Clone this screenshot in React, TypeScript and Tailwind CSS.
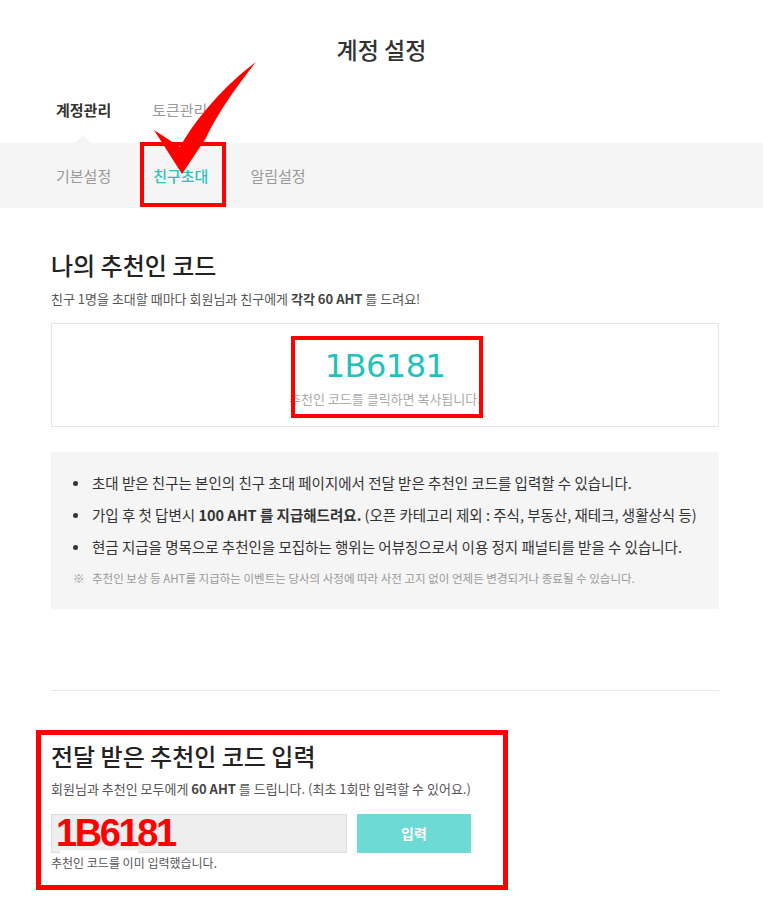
import React from "react";

export default function App() {
  return (
    <div className="relative w-[763px] h-[910px] bg-white font-['Noto_Sans_CJK_KR','Noto_Sans',sans-serif] text-[#333] overflow-hidden">
      {/* Title */}
      <div className="pt-[34px] h-[64px] text-center text-[23px] leading-[30px] font-medium text-[#333]">계정 설정</div>

      {/* Top tabs */}
      <div className="h-[79px] pt-[36px] pl-[56px] flex gap-[41px] text-[15px] leading-[20px]">
        <span className="font-bold text-[#333]">계정관리</span>
        <span className="text-[#999]">토큰관리</span>
      </div>

      {/* Sub tabs */}
      <div className="relative h-[65px] bg-[#f5f5f5] pl-[56px] flex items-center gap-[42px] text-[15px] leading-[20px]">
        <div className="absolute left-[75px] top-[-8px] w-0 h-0 border-l-[8px] border-r-[8px] border-b-[8px] border-l-transparent border-r-transparent border-b-[#f5f5f5]" />
        <span className="text-[#999]">기본설정</span>
        <span className="font-medium text-[#2bc3bb]">친구초대</span>
        <span className="text-[#999]">알림설정</span>
      </div>

      <div className="ml-[51px] w-[668px]">
        {/* Section 1 */}
        <h2 className="mt-[42px] text-[24px] leading-[30px] font-medium text-[#222]">나의 추천인 코드</h2>
        <p className="mt-[10px] text-[13px] leading-[18px] text-[#555]">
          친구 1명을 초대할 때마다 회원님과 친구에게 <b className="font-bold text-[#444]">각각 60 AHT</b> 를 드려요!
        </p>
        <div className="mt-[15px] h-[104px] border border-[#e5e5e5] flex flex-col items-center">
          <div className="mt-[22px] text-[32px] leading-[40px] font-['DejaVu_Sans',sans-serif] text-[#22c2ba] tracking-[-0.5px]">1B6181</div>
          <div className="mt-[4px] text-[13px] leading-[18px] text-[#aaa]">추천인 코드를 클릭하면 복사됩니다.</div>
        </div>

        {/* Info box */}
        <div className="mt-[25px] h-[157px] bg-[#f5f5f5] pl-[22px] pt-[15px] text-[14.5px] text-[#333]">
          <div className="h-[32px] flex items-center gap-[14px]">
            <span className="w-[5px] h-[5px] rounded-full bg-[#333] shrink-0" />
            <span>초대 받은 친구는 본인의 친구 초대 페이지에서 전달 받은 추천인 코드를 입력할 수 있습니다.</span>
          </div>
          <div className="h-[32px] flex items-center gap-[14px]">
            <span className="w-[5px] h-[5px] rounded-full bg-[#333] shrink-0" />
            <span>
              가입 후 첫 답변시 <b className="font-bold">100 AHT 를 지급해드려요.</b> (오픈 카테고리 제외 : 주식, 부동산, 재테크, 생활상식 등)
            </span>
          </div>
          <div className="h-[32px] flex items-center gap-[14px]">
            <span className="w-[5px] h-[5px] rounded-full bg-[#333] shrink-0" />
            <span>현금 지급을 명목으로 추천인을 모집하는 행위는 어뷰징으로서 이용 정지 패널티를 받을 수 있습니다.</span>
          </div>
          <div className="mt-[6px] h-[20px] flex items-center text-[11.5px] text-[#999]">
            <span className="w-[19px]">※</span>
            <span>추천인 보상 등 AHT를 지급하는 이벤트는 당사의 사정에 따라 사전 고지 없이 언제든 변경되거나 종료될 수 있습니다.</span>
          </div>
        </div>

        <div className="mt-[81px] h-px bg-[#e8e8e8]" />

        {/* Section 2 */}
        <h2 className="mt-[50px] text-[24px] leading-[30px] font-medium text-[#222]">전달 받은 추천인 코드 입력</h2>
        <p className="mt-[9px] text-[13px] leading-[18px] text-[#555]">
          회원님과 추천인 모두에게 <b className="font-bold text-[#444]">60 AHT</b> 를 드립니다. (최초 1회만 입력할 수 있어요.)
        </p>
        <div className="mt-[16px] flex gap-[10px]">
          <div className="relative w-[296px] h-[39px] bg-[#eeeeee] border border-[#dddddd]">
            <div className="absolute left-[8px] bottom-[-4px] w-[78px] h-[6px] bg-white" />
            <div className="absolute left-[4px] top-[-4px] text-[38px] leading-[44px] font-bold tracking-[-2.4px] text-[#ff0000] font-['Liberation_Sans',sans-serif]">1B6181</div>
          </div>
          <button className="w-[114px] h-[39px] bg-[#6ddad5] text-white text-[14px] font-bold">입력</button>
        </div>
        <p className="mt-[2px] text-[12px] leading-[16px] text-[#555]">추천인 코드를 이미 입력했습니다.</p>
      </div>

      {/* Annotations */}
      <div className="absolute left-[140px] top-[142px] w-[86px] h-[65px] border-[4px] border-[#ff0000] pointer-events-none" />
      <div className="absolute left-[291px] top-[336px] w-[192px] h-[82px] border-[4px] border-[#ff0000] pointer-events-none" />
      <div className="absolute left-[36px] top-[730px] w-[472px] h-[160px] border-[5px] border-[#ff0000] pointer-events-none" />
      <svg className="absolute left-0 top-0 pointer-events-none" width="763" height="910" viewBox="0 0 763 910">
        <path d="M256 62 C 240 82 218 112 206 138 L 182 174 L 154 130 L 180 147 C 196 118 226 84 256 62 Z" fill="#ff0000" />
      </svg>
    </div>
  );
}
